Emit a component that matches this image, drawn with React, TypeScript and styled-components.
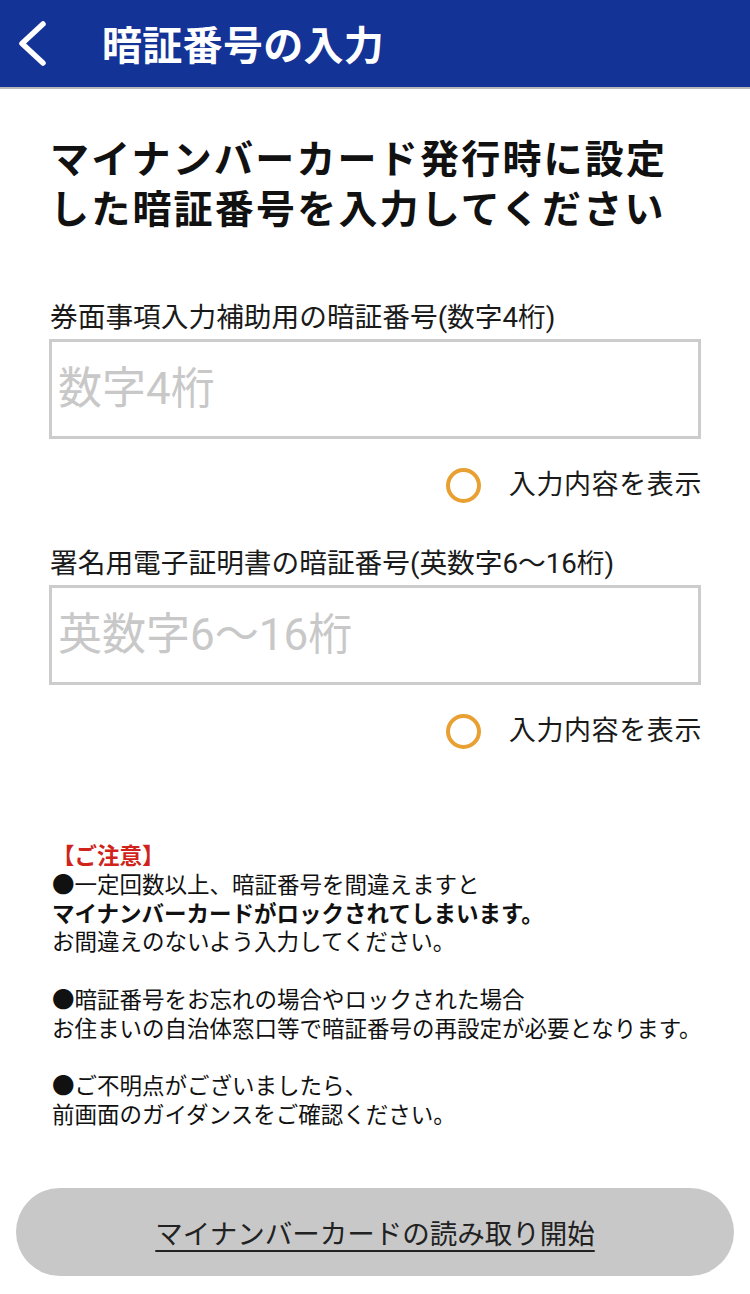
import React, { useState } from "react";
import styled, { createGlobalStyle } from "styled-components";

const GlobalStyle = createGlobalStyle`
  html, body { margin: 0; padding: 0; background: #ffffff; }
  body { font-family: Roboto, "Noto Sans CJK JP", "Noto Sans", sans-serif; color: #111; }
  * { box-sizing: border-box; }
`;

const Page = styled.div`
  width: 750px;
  min-height: 1294px;
  background: #fff;
  display: flex;
  flex-direction: column;
`;

const Header = styled.header`
  height: 89px;
  background: #143397;
  border-bottom: 2px solid #b9b9b9;
  display: flex;
  align-items: center;
  padding-left: 16px;
`;

const BackButton = styled.button`
  width: 36px;
  height: 50px;
  padding: 0;
  border: none;
  background: transparent;
  display: flex;
  align-items: center;
  justify-content: center;
  cursor: pointer;
`;

const HeaderTitle = styled.h1`
  margin: 0 0 2px 50px;
  font-family: "Noto Sans CJK JP", sans-serif;
  font-size: 40px;
  font-weight: 700;
  color: #fff;
  line-height: 1;
  letter-spacing: 0.3px;
`;

const Content = styled.main`
  padding: 0 49px 0 50px;
  display: flex;
  flex-direction: column;
`;

const Heading = styled.h2`
  margin: 42px 0 0;
  font-family: "Noto Sans CJK JP", sans-serif;
  font-size: 39px;
  line-height: 50px;
  font-weight: 700;
  letter-spacing: 2.2px;
  color: #111;
`;

const FieldLabel = styled.label<{ $top: number }>`
  display: block;
  margin-top: ${(p) => p.$top}px;
  font-size: 27.7px;
  line-height: 34px;
  color: #1a1a1a;
`;

const Input = styled.input`
  display: block;
  margin: 4px 0 0 -1px;
  width: 652px;
  height: 100px;
  border: 3px solid #cccccc;
  border-radius: 0;
  padding: 0 6px;
  font-family: Roboto, "Noto Sans CJK JP", sans-serif;
  font-size: 44px;
  color: #222;
  outline: none;
  &::placeholder {
    color: #c8c8c8;
  }
`;

const ToggleRow = styled.div`
  margin-top: 26px;
  height: 40px;
  display: flex;
  justify-content: flex-end;
  align-items: center;
  gap: 28px;
`;

const Radio = styled.span<{ $on: boolean }>`
  width: 35px;
  height: 35px;
  border-radius: 50%;
  border: 4px solid #e9a033;
  background: ${(p) => (p.$on ? "radial-gradient(circle, #e9a033 0 45%, transparent 47%)" : "transparent")};
  cursor: pointer;
`;

const ToggleText = styled.span`
  font-size: 27px;
  line-height: 40px;
  color: #1a1a1a;
  margin-right: -1px;
  letter-spacing: 0.6px;
`;

const Notice = styled.section`
  margin-top: 91px;
  padding-left: 2px;
  font-size: 22.5px;
  line-height: 28.8px;
  color: #111;
`;

const NoticeTitle = styled.div`
  color: #cf231b;
  font-weight: 700;
`;

const Line = styled.div<{ $bold?: boolean }>`
  font-weight: ${(p) => (p.$bold ? 700 : 400)};
  white-space: nowrap;
`;

const Spacer = styled.div`
  height: 28.8px;
`;

const Footer = styled.div`
  padding: 58px 16px 0;
`;

const StartButton = styled.button`
  width: 100%;
  height: 88px;
  border: none;
  border-radius: 44px;
  background: #c8c8c8;
  font-family: "Noto Sans CJK JP", sans-serif;
  font-size: 27.5px;
  color: #222;
  text-decoration: underline;
  text-decoration-thickness: 2px;
  text-underline-offset: 6px;
  cursor: pointer;
`;

const Chevron = () => (
  <svg width="36" height="50" viewBox="0 0 36 50">
    <polyline
      points="27,5 6,24.5 27,44"
      fill="none"
      stroke="#ffffff"
      strokeWidth="5.5"
      strokeLinecap="round"
      strokeLinejoin="round"
    />
  </svg>
);

export default function App() {
  const [show1, setShow1] = useState(false);
  const [show2, setShow2] = useState(false);
  return (
    <Page>
      <GlobalStyle />
      <Header>
        <BackButton aria-label="戻る">
          <Chevron />
        </BackButton>
        <HeaderTitle>暗証番号の入力</HeaderTitle>
      </Header>
      <Content>
        <Heading>
          マイナンバーカード発行時に設定
          <br />
          した暗証番号を入力してください
        </Heading>

        <FieldLabel $top={70} htmlFor="pin4">
          券面事項入力補助用の暗証番号(数字4桁)
        </FieldLabel>
        <Input id="pin4" type={show1 ? "text" : "password"} placeholder="数字4桁" />
        <ToggleRow>
          <Radio $on={show1} onClick={() => setShow1(!show1)} />
          <ToggleText>入力内容を表示</ToggleText>
        </ToggleRow>

        <FieldLabel $top={42} htmlFor="pin16">
          署名用電子証明書の暗証番号(英数字6〜16桁)
        </FieldLabel>
        <Input id="pin16" type={show2 ? "text" : "password"} placeholder="英数字6〜16桁" />
        <ToggleRow>
          <Radio $on={show2} onClick={() => setShow2(!show2)} />
          <ToggleText>入力内容を表示</ToggleText>
        </ToggleRow>

        <Notice>
          <NoticeTitle>【ご注意】</NoticeTitle>
          <Line>●一定回数以上、暗証番号を間違えますと</Line>
          <Line $bold>マイナンバーカードがロックされてしまいます。</Line>
          <Line>お間違えのないよう入力してください。</Line>
          <Spacer />
          <Line>●暗証番号をお忘れの場合やロックされた場合</Line>
          <Line>お住まいの自治体窓口等で暗証番号の再設定が必要となります。</Line>
          <Spacer />
          <Line>●ご不明点がございましたら、</Line>
          <Line>前画面のガイダンスをご確認ください。</Line>
        </Notice>
      </Content>
      <Footer>
        <StartButton>マイナンバーカードの読み取り開始</StartButton>
      </Footer>
    </Page>
  );
}
